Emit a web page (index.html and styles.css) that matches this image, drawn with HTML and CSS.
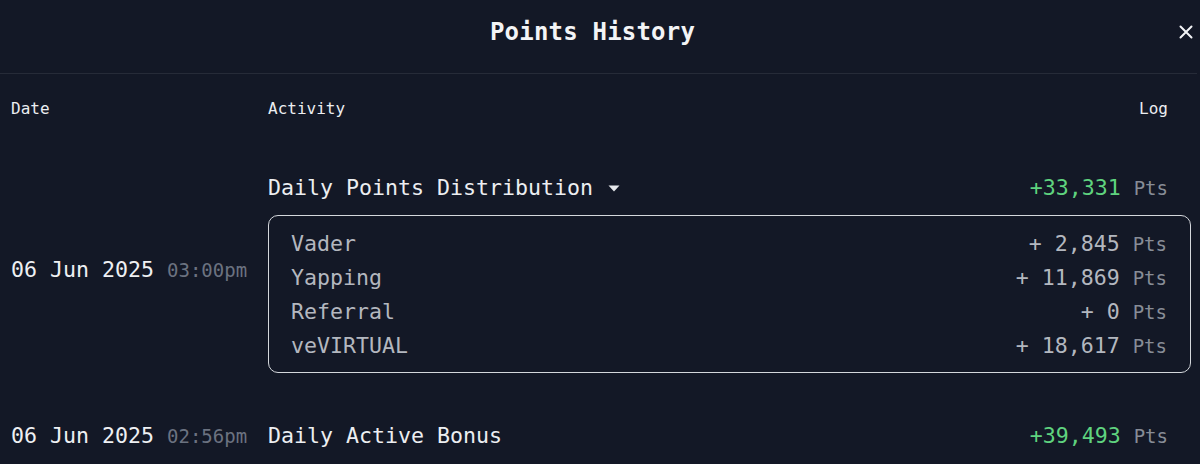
FILE: index.html
```html
<!DOCTYPE html>
<html>
<head>
<meta charset="utf-8">
<link rel="stylesheet" href="styles.css">
</head>
<body>
<div class="modal">
  <header class="modal-header">
    <span></span>
    <h1 class="title">Points History</h1>
    <button class="close" aria-label="Close">
      <svg width="14" height="14" viewBox="0 0 14 14"><path d="M1.5 1.5 L12.5 12.5 M12.5 1.5 L1.5 12.5" stroke="#f3f4f6" stroke-width="2" stroke-linecap="round" fill="none"/></svg>
    </button>
  </header>
  <div class="cols">
    <div class="col-date">Date</div>
    <div class="col-activity">Activity</div>
    <div class="col-log">Log</div>
  </div>
  <div class="row row-first">
    <div class="date date-mid">06 Jun 2025 <span class="time">03:00pm</span></div>
    <div class="activity">
      <div class="act-line">
        <span class="act-name">Daily Points Distribution <svg class="caret" width="12" height="7" viewBox="0 0 12 7"><path d="M0.5 0.5 H11.5 L6 6.5 Z" fill="#e5e7eb"/></svg></span>
        <span class="gain">+33,331<span class="pts">Pts</span></span>
      </div>
      <div class="breakdown">
        <div class="item"><span>Vader</span><span>+ 2,845<span class="pts">Pts</span></span></div>
        <div class="item"><span>Yapping</span><span>+ 11,869<span class="pts">Pts</span></span></div>
        <div class="item"><span>Referral</span><span>+ 0<span class="pts">Pts</span></span></div>
        <div class="item"><span>veVIRTUAL</span><span>+ 18,617<span class="pts">Pts</span></span></div>
      </div>
    </div>
  </div>
  <div class="row row-second">
    <div class="date">06 Jun 2025 <span class="time">02:56pm</span></div>
    <div class="activity">
      <div class="act-line">
        <span class="act-name">Daily Active Bonus</span>
        <span class="gain">+39,493<span class="pts">Pts</span></span>
      </div>
    </div>
  </div>
</div>
</body>
</html>
```
FILE: styles.css
```css
* { box-sizing: border-box; }
html, body {
  margin: 0;
  padding: 0;
  background: #131826;
  height: 100%;
  overflow: hidden;
}
body {
  font-family: "DejaVu Sans Mono", "Liberation Mono", monospace;
  color: #e5e7eb;
}
.modal {
  width: 1200px;
}
.modal-header {
  height: 74px;
  display: grid;
  grid-template-columns: 1fr auto 1fr;
  align-items: center;
  border-bottom: 1px solid #262b38;
  margin-right: 3px;
  padding-bottom: 9px;
}
.title {
  margin: 0 12px 0 0;
  font-size: 24px;
  font-weight: bold;
  color: #f3f4f6;
  letter-spacing: 0.2px;
}
.close {
  justify-self: end;
  margin-right: 4px;
  background: none;
  border: 0;
  padding: 0;
  width: 14px;
  height: 14px;
  display: flex;
  align-items: center;
  justify-content: center;
}
.cols {
  display: flex;
  align-items: center;
  height: 68px;
  font-size: 16px;
  color: #eceef1;
  padding: 0 32px 0 11px;
}
.col-date { width: 257px; }
.col-activity { flex: 1; }
.col-log { text-align: right; }
.row {
  display: flex;
  align-items: center;
  padding-left: 11px;
}
.row-first {
  padding-top: 31px;
}
.row-second {
  padding-top: 48px;
}
.date {
  width: 257px;
  font-size: 21.6px;
  line-height: 30px;
  color: #eef0f3;
  white-space: nowrap;
}
.date-mid { margin-bottom: 7px; }
.time {
  font-size: 19px;
  color: #6b7280;
}
.activity {
  flex: 1;
  padding-right: 9px;
}
.act-line {
  display: flex;
  justify-content: space-between;
  align-items: center;
  padding-right: 23px;
  font-size: 21.6px;
  line-height: 30px;
  color: #eceef1;
}
.act-name {
  display: flex;
  align-items: center;
  white-space: pre;
}
.caret {
  margin-left: 2px;
  margin-top: 1px;
}
.gain { color: #5fd37f; }
.pts {
  font-size: 19px;
  color: #878c96;
  margin-left: 13px;
}
.breakdown {
  margin-top: 12px;
  border: 1.5px solid #d4d7dc;
  border-radius: 10px;
  padding: 11px 23px 9px 22px;
}
.item {
  display: flex;
  justify-content: space-between;
  font-size: 21.6px;
  line-height: 34px;
  color: #b3b7bf;
}
```
